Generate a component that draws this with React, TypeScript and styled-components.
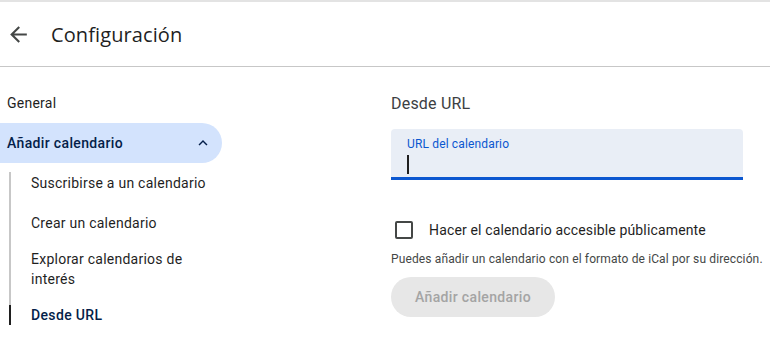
import styled, { createGlobalStyle } from "styled-components";

const GlobalStyle = createGlobalStyle`
  html, body {
    margin: 0;
    padding: 0;
    background: #ffffff;
    font-family: Roboto, "Noto Sans", Arial, sans-serif;
    color: #1f1f1f;
  }
`;

const Page = styled.div`
  width: 770px;
  height: 339px;
  overflow: hidden;
  border-top: 2px solid #e3e3e3;
  box-sizing: border-box;
`;

const Header = styled.header`
  display: flex;
  align-items: center;
  height: 64px;
  border-bottom: 1px solid #c7c7c7;
  padding-left: 6px;
  gap: 20px;
`;

const BackButton = styled.button`
  display: flex;
  align-items: center;
  justify-content: center;
  width: 25px;
  height: 25px;
  padding: 0;
  border: none;
  background: none;
  color: #444746;
`;

const Title = styled.h1`
  margin: 0;
  font-family: "Open Sans", Roboto, sans-serif;
  font-weight: 400;
  font-size: 20px;
  color: #1f1f1f;
  letter-spacing: 0.1px;
`;

const Body = styled.div`
  display: flex;
  padding-top: 16px;
`;

const Sidebar = styled.nav`
  width: 222px;
  flex-shrink: 0;
  display: flex;
  flex-direction: column;
`;

const NavItem = styled.div`
  height: 40px;
  display: flex;
  align-items: center;
  padding-left: 7px;
  font-size: 14px;
  letter-spacing: 0.25px;
  color: #1f1f1f;
`;

const NavActive = styled(NavItem)`
  justify-content: space-between;
  padding-right: 10px;
  background: #d3e3fd;
  border-radius: 0 20px 20px 0;
  color: #041e49;
  font-weight: 500;
  letter-spacing: 0.35px;
`;

const SubList = styled.div`
  position: relative;
  display: flex;
  flex-direction: column;
  margin-left: 9px;

  &::before {
    content: "";
    position: absolute;
    left: 0;
    top: 9px;
    bottom: 10px;
    width: 2px;
    background: #c7c7c7;
  }
`;

const SubItem = styled.div<{ $active?: boolean }>`
  position: relative;
  min-height: 40px;
  display: flex;
  align-items: center;
  padding: 6px 0 6px 22px;
  box-sizing: border-box;
  width: 210px;
  font-size: 14px;
  line-height: 20px;
  letter-spacing: ${(p) => (p.$active ? "0.35px" : "0.25px")};
  color: ${(p) => (p.$active ? "#041e49" : "#1f1f1f")};
  font-weight: ${(p) => (p.$active ? 500 : 400)};

  &::before {
    content: "";
    display: ${(p) => (p.$active ? "block" : "none")};
    position: absolute;
    left: 0;
    top: 10px;
    bottom: 10px;
    width: 2px;
    background: #1f1f1f;
  }
`;

const Content = styled.section`
  margin-left: 169px;
  width: 372px;
  display: flex;
  flex-direction: column;
`;

const SectionTitle = styled.h2`
  margin: 0;
  height: 40px;
  display: flex;
  align-items: center;
  font-weight: 400;
  font-size: 16px;
  letter-spacing: 0.2px;
  color: #3c4043;
`;

const Field = styled.div`
  margin-top: 6px;
  width: 352px;
  height: 51px;
  box-sizing: border-box;
  background: #e9eef6;
  border-radius: 4px 4px 0 0;
  border-bottom: 3px solid #0b57d0;
  padding: 7px 16px 0;
  display: flex;
  flex-direction: column;
`;

const FieldLabel = styled.label`
  font-size: 12px;
  line-height: 16px;
  letter-spacing: 0.15px;
  color: #0b57d0;
`;

const Caret = styled.span`
  margin-top: 3px;
  width: 2px;
  height: 19px;
  background: #1f1f1f;
`;

const CheckRow = styled.label`
  display: flex;
  align-items: center;
  gap: 16px;
  margin-top: 41px;
  padding-left: 4px;
  font-size: 14px;
  letter-spacing: 0.15px;
  color: #1f1f1f;
`;

const CheckBox = styled.span`
  width: 18px;
  height: 18px;
  box-sizing: border-box;
  border: 2px solid #444746;
  border-radius: 2px;
`;

const Help = styled.p`
  margin: 12px 0 0;
  font-size: 12px;
  line-height: 16px;
  letter-spacing: 0.13px;
  color: #444746;
  white-space: nowrap;
`;

const DisabledButton = styled.button`
  margin-top: 10px;
  width: 164px;
  height: 40px;
  border: none;
  border-radius: 20px;
  background: #e7e7e7;
  color: #a4a4a4;
  font-family: Roboto, sans-serif;
  font-size: 14px;
  font-weight: 500;
  letter-spacing: 0.35px;
`;

export default function App() {
  return (
    <>
      <GlobalStyle />
      <Page>
        <Header>
          <BackButton aria-label="Atrás">
            <svg width="25" height="25" viewBox="0 0 24 24" fill="none">
              <path d="M20 11H7.83l5.59-5.59L12 4l-8 8 8 8 1.41-1.41L7.83 13H20v-2z" fill="currentColor" />
            </svg>
          </BackButton>
          <Title>Configuración</Title>
        </Header>
        <Body>
          <Sidebar>
            <NavItem>General</NavItem>
            <NavActive>
              Añadir calendario
              <svg width="18" height="18" viewBox="0 0 24 24">
                <path d="M7.41 15.41L12 10.83l4.59 4.58L18 14l-6-6-6 6z" fill="#041e49" />
              </svg>
            </NavActive>
            <SubList>
              <SubItem>Suscribirse a un calendario</SubItem>
              <SubItem>Crear un calendario</SubItem>
              <SubItem>Explorar calendarios de interés</SubItem>
              <SubItem $active>Desde URL</SubItem>
            </SubList>
          </Sidebar>
          <Content>
            <SectionTitle>Desde URL</SectionTitle>
            <Field>
              <FieldLabel>URL del calendario</FieldLabel>
              <Caret />
            </Field>
            <CheckRow>
              <CheckBox />
              Hacer el calendario accesible públicamente
            </CheckRow>
            <Help>Puedes añadir un calendario con el formato de iCal por su dirección.</Help>
            <DisabledButton disabled>Añadir calendario</DisabledButton>
          </Content>
        </Body>
      </Page>
    </>
  );
}
